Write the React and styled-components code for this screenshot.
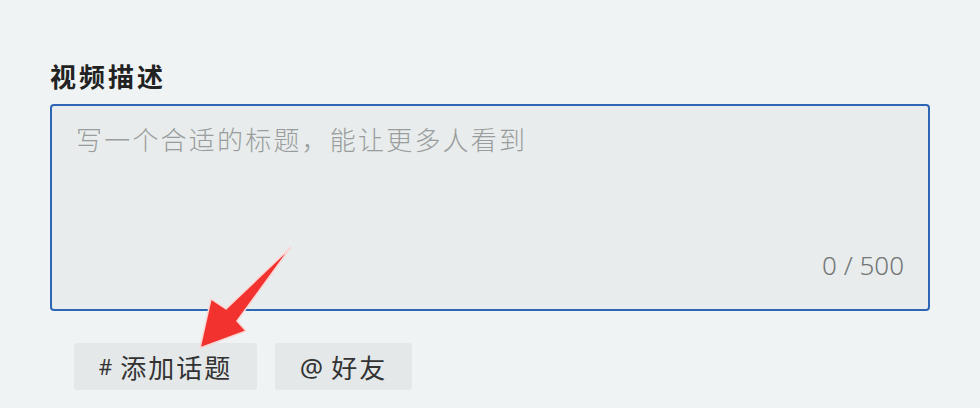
import React from 'react';
import styled, { createGlobalStyle } from 'styled-components';

const GlobalStyle = createGlobalStyle`
  * { box-sizing: border-box; }
  body {
    margin: 0;
    background: #eff3f3;
    font-family: "Noto Sans", "Noto Sans CJK SC", sans-serif;
  }
`;

const Page = styled.div`
  position: relative;
  width: 980px;
  height: 408px;
  padding: 58px 50px 0 50px;
  overflow: hidden;
`;

const Label = styled.div`
  font-family: "Noto Sans CJK SC", sans-serif;
  font-size: 26px;
  line-height: 36px;
  font-weight: 700;
  letter-spacing: 3px;
  color: #222;
  margin-bottom: 10px;
`;

const Box = styled.div`
  height: 207px;
  border: 2px solid #2c66b5;
  border-radius: 4px;
  background: #e8ecec;
  padding: 15px 24px 26px 24px;
  display: flex;
  flex-direction: column;
  justify-content: space-between;
`;

const Placeholder = styled.div`
  font-family: "Noto Sans CJK SC", sans-serif;
  font-size: 26px;
  font-weight: 300;
  line-height: 36px;
  letter-spacing: 2.2px;
  color: #9a9d9d;
`;

const Counter = styled.div`
  align-self: flex-end;
  font-size: 26px;
  font-weight: 300;
  line-height: 36px;
  color: #737676;
`;

const Tags = styled.div`
  display: flex;
  gap: 18px;
  margin: 32px 0 0 24px;
`;

const Tag = styled.button`
  height: 47px;
  width: ${(p) => p.$w}px;
  border: none;
  border-radius: 3px;
  background: #e4e8e8;
  display: flex;
  align-items: center;
  justify-content: center;
  gap: 8px;
  font-family: "Noto Sans CJK SC", sans-serif;
  font-size: 26px;
  letter-spacing: 2px;
  color: #333;
  padding: 0;
`;

const Sym = styled.span`
  font-family: "Noto Sans", sans-serif;
  font-size: ${(p) => p.$size}px;
  letter-spacing: 0;
  color: #333;
`;

const Arrow = styled.svg`
  position: absolute;
  left: 0;
  top: 0;
  pointer-events: none;
`;

export default function App() {
  return (
    <>
      <GlobalStyle />
      <Page>
        <Label>视频描述</Label>
        <Box>
          <Placeholder>写一个合适的标题，能让更多人看到</Placeholder>
          <Counter>0 / 500</Counter>
        </Box>
        <Tags>
          <Tag $w={183}>
            <Sym $size={21}>#</Sym>添加话题
          </Tag>
          <Tag $w={137}>
            <Sym $size={26}>@</Sym>好友
          </Tag>
        </Tags>
        <Arrow width="980" height="408" viewBox="0 0 980 408">
          <polygon
            points="291,247 237,321 246,331 200,348 211,299 226,309"
            fill="#f2322e"
            stroke="#fbd6d4"
            strokeWidth="1.5"
            strokeLinejoin="round"
          />
        </Arrow>
      </Page>
    </>
  );
}
